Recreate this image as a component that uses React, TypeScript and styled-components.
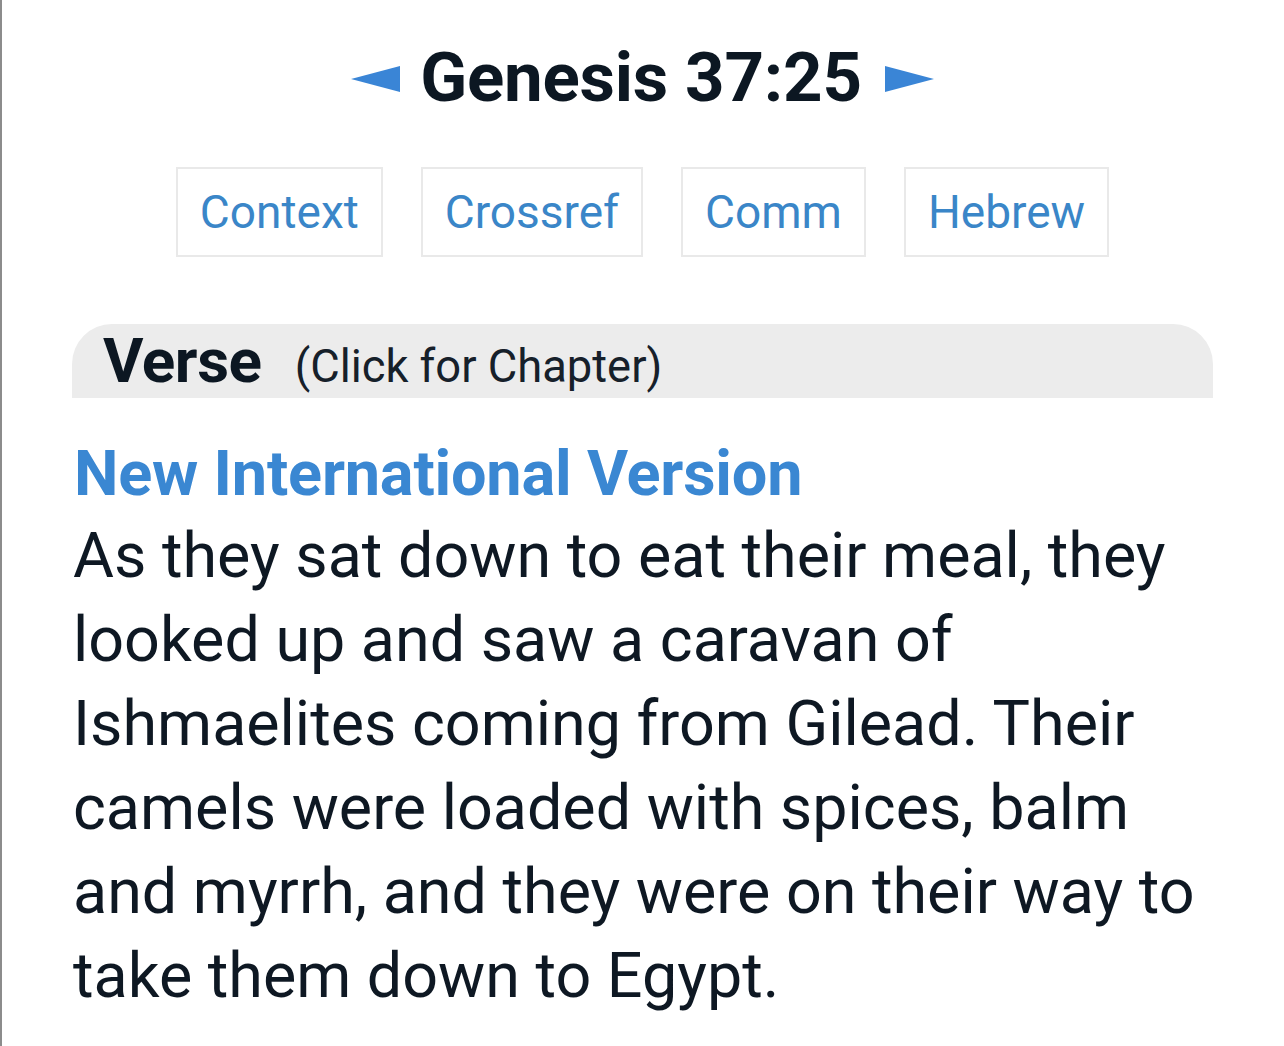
import React from "react";
import styled, { createGlobalStyle } from "styled-components";

const GlobalStyle = createGlobalStyle`
  html, body {
    margin: 0;
    padding: 0;
    background: #ffffff;
  }
  body {
    font-family: Roboto, "Noto Sans", "Liberation Sans", sans-serif;
    color: #0e1823;
  }
`;

const Page = styled.div`
  min-height: 1046px;
  box-sizing: border-box;
  border-left: 2px solid #8c8c8c;
  padding: 38px 71px 0 70px;
  display: flex;
  flex-direction: column;
`;

const TitleRow = styled.div`
  display: flex;
  align-items: center;
  justify-content: center;
  gap: 19px;
`;

const Title = styled.h1`
  margin: 0;
  font-size: 69px;
  line-height: 80px;
  font-weight: 700;
  color: #0c1722;
  letter-spacing: -0.2px;
`;

const Arrow = styled.svg<{ $side: "left" | "right" }>`
  display: block;
  width: 49px;
  height: 26px;
  flex: none;
  margin-top: 2px;
  margin-left: ${(p) => (p.$side === "right" ? "4px" : "0")};
  margin-right: ${(p) => (p.$side === "left" ? "1px" : "0")};
`;

const ButtonRow = styled.div`
  display: flex;
  justify-content: center;
  gap: 38px;
  margin-top: 49px;
`;

const NavButton = styled.a`
  display: flex;
  align-items: center;
  justify-content: center;
  box-sizing: border-box;
  height: 90px;
  padding: 0 22px;
  border: 2px solid #e9e9e9;
  font-size: 46px;
  color: #3a86c8;
  text-decoration: none;
`;

const VerseBar = styled.div`
  margin-top: 67px;
  height: 74px;
  box-sizing: border-box;
  background: #ececec;
  border-radius: 40px 40px 0 0;
  padding: 0 30px 0 31px;
  display: flex;
  align-items: baseline;
  gap: 33px;
`;

const VerseLabel = styled.span`
  font-size: 62px;
  font-weight: 700;
  line-height: 74px;
  color: #0c1722;
  letter-spacing: -0.4px;
`;

const ChapterLink = styled.span`
  font-size: 45.3px;
  line-height: 74px;
  color: #16202a;
`;

const VersionTitle = styled.h2`
  margin: 36px 0 0 2px;
  font-size: 63px;
  line-height: 80px;
  font-weight: 700;
  color: #3a87d2;
  letter-spacing: -0.2px;
`;

const VerseText = styled.p`
  margin: 0 0 0 1px;
  font-size: 62.8px;
  line-height: 84px;
  color: #0e1823;
`;

const LeftArrow = () => (
  <Arrow $side="left" viewBox="0 0 49 26">
    <polygon points="0,13 49,0 49,26" fill="#3a85d6" />
  </Arrow>
);

const RightArrow = () => (
  <Arrow $side="right" viewBox="0 0 49 26">
    <polygon points="0,0 49,13 0,26" fill="#3a85d6" />
  </Arrow>
);

export default function App() {
  const buttons = ["Context", "Crossref", "Comm", "Hebrew"];
  return (
    <>
      <GlobalStyle />
      <Page>
        <TitleRow>
          <LeftArrow />
          <Title>Genesis 37:25</Title>
          <RightArrow />
        </TitleRow>
        <ButtonRow>
          {buttons.map((b) => (
            <NavButton key={b} href="#">
              {b}
            </NavButton>
          ))}
        </ButtonRow>
        <VerseBar>
          <VerseLabel>Verse</VerseLabel>
          <ChapterLink>(Click for Chapter)</ChapterLink>
        </VerseBar>
        <VersionTitle>New International Version</VersionTitle>
        <VerseText>
          As they sat down to eat their meal, they looked up and saw a caravan of Ishmaelites coming from Gilead. Their
          camels were loaded with spices, balm and myrrh, and they were on their way to take them down to Egypt.
        </VerseText>
      </Page>
    </>
  );
}
